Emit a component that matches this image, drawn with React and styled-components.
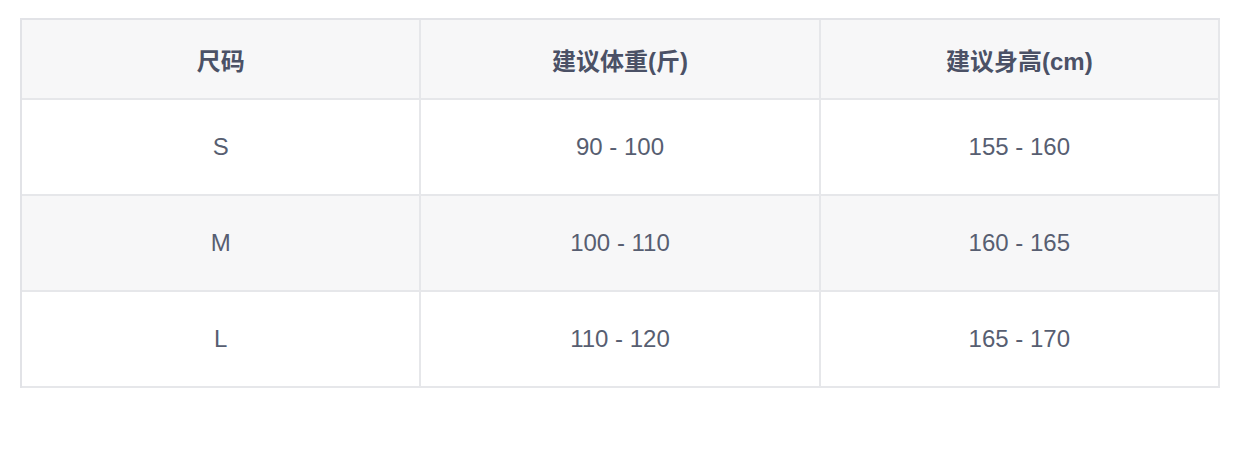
import React from 'react';
import styled, { createGlobalStyle } from 'styled-components';

const GlobalStyle = createGlobalStyle`
    body {
        margin: 0;
        background: #ffffff;
        font-family: "Liberation Sans", Arial, "Noto Sans CJK SC", sans-serif;
    }
`;

const rows = [
    ['S', '90 - 100', '155 - 160'],
    ['M', '100 - 110', '160 - 165'],
    ['L', '110 - 120', '165 - 170'],
];

const App = () => {
    return (
        <Page>
            <GlobalStyle />
            <SizeTable>
                <thead>
                    <tr>
                        <HeadCell>尺码</HeadCell>
                        <HeadCell>建议体重(斤)</HeadCell>
                        <HeadCell>建议身高(cm)</HeadCell>
                    </tr>
                </thead>
                <tbody>
                    {rows.map((row, i) => (
                        <Row key={row[0]} striped={i % 2 === 1}>
                            {row.map((value) => (
                                <Cell key={value}>{value}</Cell>
                            ))}
                        </Row>
                    ))}
                </tbody>
            </SizeTable>
        </Page>
    );
};

const Page = styled.div`
    padding: 18px 20px;
`;

const SizeTable = styled.table`
    width: 1200px;
    table-layout: fixed;
    border-collapse: separate;
    border-spacing: 0;
    border-top: 2px solid #e2e3e7;
    border-left: 2px solid #e2e3e7;
`;

const HeadCell = styled.th`
    height: 78px;
    padding: 0;
    background: #f7f7f8;
    border-right: 2px solid #e6e7ea;
    border-bottom: 2px solid #e6e7ea;
    color: #4b5166;
    font-family: "Liberation Sans", Arial, "Noto Sans CJK SC", sans-serif;
    font-size: 24px;
    font-weight: 700;
    text-align: center;
    vertical-align: middle;
`;

const Row = styled.tr.withConfig({ shouldForwardProp: (p) => p !== 'striped' })`
    background: ${(p) => (p.striped ? '#f7f7f8' : '#ffffff')};
`;

const Cell = styled.td`
    height: 94px;
    padding: 0;
    border-right: 2px solid #e6e7ea;
    border-bottom: 2px solid #e6e7ea;
    color: #575e71;
    font-size: 24px;
    text-align: center;
    vertical-align: middle;
`;

export default App;
